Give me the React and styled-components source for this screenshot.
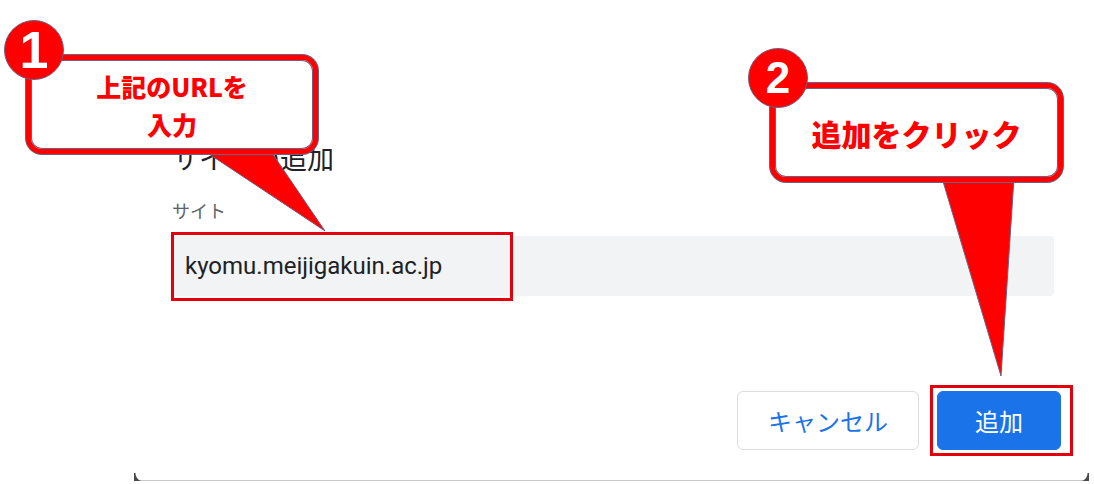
import React from "react";
import styled, { createGlobalStyle } from "styled-components";

const Global = createGlobalStyle`
  html, body { margin: 0; padding: 0; background: #ffffff; }
  body { width: 1094px; height: 484px; overflow: hidden; font-family: "Roboto", "Noto Sans CJK JP", sans-serif; }
  * { box-sizing: border-box; }
`;

const Page = styled.div`
  position: relative;
  width: 1094px;
  height: 484px;
  background: #fff;
`;

const Dialog = styled.div`
  position: relative;
  margin-left: 134px;
  width: 955px;
  height: 481px;
  display: flex;
  flex-direction: column;
  padding: 142px 35px 30px 38px;
  border-bottom: 1px solid #c9c9c9;
  background: #fff;

  &::before, &::after {
    content: "";
    position: absolute;
    bottom: -1px;
    width: 10px;
    height: 8px;
  }
  &::before {
    left: 0;
    background: radial-gradient(circle at 100% 0, transparent 8px, #4a4a4a 9px);
  }
  &::after {
    right: 0;
    background: radial-gradient(circle at 0 0, transparent 8px, #4a4a4a 9px);
  }
`;

const Title = styled.h2`
  margin: 0;
  font-family: "Noto Sans CJK JP", sans-serif;
  font-weight: 400;
  font-size: 27px;
  line-height: 32px;
  color: #202124;
`;

const Label = styled.div`
  margin-top: 24px;
  font-family: "Noto Sans CJK JP", sans-serif;
  font-size: 18px;
  line-height: 24px;
  color: #5f6368;
`;

const InputWrap = styled.div`
  position: relative;
  margin-top: 14px;
`;

const Input = styled.div`
  height: 60px;
  border-radius: 4px;
  background: #f1f3f4;
  padding-left: 13px;
  display: flex;
  align-items: center;
  font-family: "Roboto", sans-serif;
  font-size: 24px;
  color: #202124;
`;

const Highlight = styled.div`
  position: absolute;
  left: ${p => p.$left}px;
  top: ${p => p.$top}px;
  width: ${p => p.$width}px;
  height: ${p => p.$height}px;
  border: 3px solid #e2000d;
  pointer-events: none;
`;

const Spacer = styled.div`
  flex: 1;
`;

const Footer = styled.div`
  display: flex;
  justify-content: flex-end;
  gap: 18px;
  margin-right: -7px;
`;

const Button = styled.button`
  position: relative;
  height: 59px;
  width: ${p => p.$width}px;
  border-radius: 6px;
  font-family: "Noto Sans CJK JP", sans-serif;
  font-size: 24px;
  padding: 0;
  border: 1px solid ${p => (p.$primary ? "#1a73e8" : "#dadce0")};
  background: ${p => (p.$primary ? "#1a73e8" : "#ffffff")};
  color: ${p => (p.$primary ? "#ffffff" : "#1a73e8")};
`;

const Overlay = styled.svg`
  position: absolute;
  left: 0;
  top: 0;
  pointer-events: none;
`;

const Bubble = styled.div`
  position: absolute;
  left: ${p => p.$left}px;
  top: ${p => p.$top}px;
  width: ${p => p.$width}px;
  height: ${p => p.$height}px;
  border: 5px solid #ff0000;
  border-radius: 16px;
  background: #fff;
  box-shadow: 0 0 0 1px #6f5f80, inset 0 0 0 1px #6f5f80;
  display: flex;
  flex-direction: column;
  align-items: center;
  justify-content: center;
  font-family: "Noto Sans CJK JP", sans-serif;
  font-weight: 900;
  color: #ff0000;
  font-size: ${p => p.$size}px;
  line-height: ${p => p.$lh}px;
  text-align: center;
`;

const Badge = styled.div`
  position: absolute;
  left: ${p => p.$left}px;
  top: ${p => p.$top}px;
  width: ${p => p.$d}px;
  height: ${p => p.$d}px;
  border-radius: 50%;
  background: #ff0000;
  border: 1.5px solid #6f5f80;
  display: flex;
  align-items: center;
  justify-content: center;
  color: #fff;
  font-family: "Liberation Sans", Arial, sans-serif;
  font-weight: 700;
  font-size: ${p => p.$size}px;
  line-height: 1;
`;

export default function App() {
  return (
    <Page>
      <Global />
      <Dialog>
        <Title>サイトの追加</Title>
        <Label>サイト</Label>
        <InputWrap>
          <Input>kyomu.meijigakuin.ac.jp</Input>
          <Highlight $left={-1} $top={-4} $width={342} $height={69} />
        </InputWrap>
        <Spacer />
        <Footer>
          <Button $width={182}>キャンセル</Button>
          <Button $width={124} $primary>
            追加
            <Highlight $left={-8} $top={-7} $width={143} $height={71} />
          </Button>
        </Footer>
      </Dialog>

      <Overlay width="1094" height="484" viewBox="0 0 1094 484">
        <polygon points="203,150 270,150 325,231" fill="#ff0000" stroke="#6f5f80" strokeWidth="1" />
        <polygon points="942,178 1014,178 1001,376" fill="#ff0000" stroke="#6f5f80" strokeWidth="1" />
      </Overlay>

      <Bubble $left={26} $top={55} $width={292} $height={99} $size={25} $lh={38}>
        <span>上記のURLを</span>
        <span>入力</span>
      </Bubble>
      <Badge $left={4} $top={20} $d={60} $size={52}>1</Badge>

      <Bubble $left={770} $top={83} $width={293} $height={99} $size={30} $lh={40}>
        <span>追加をクリック</span>
      </Bubble>
      <Badge $left={748} $top={48} $d={60} $size={44}>2</Badge>
    </Page>
  );
}
